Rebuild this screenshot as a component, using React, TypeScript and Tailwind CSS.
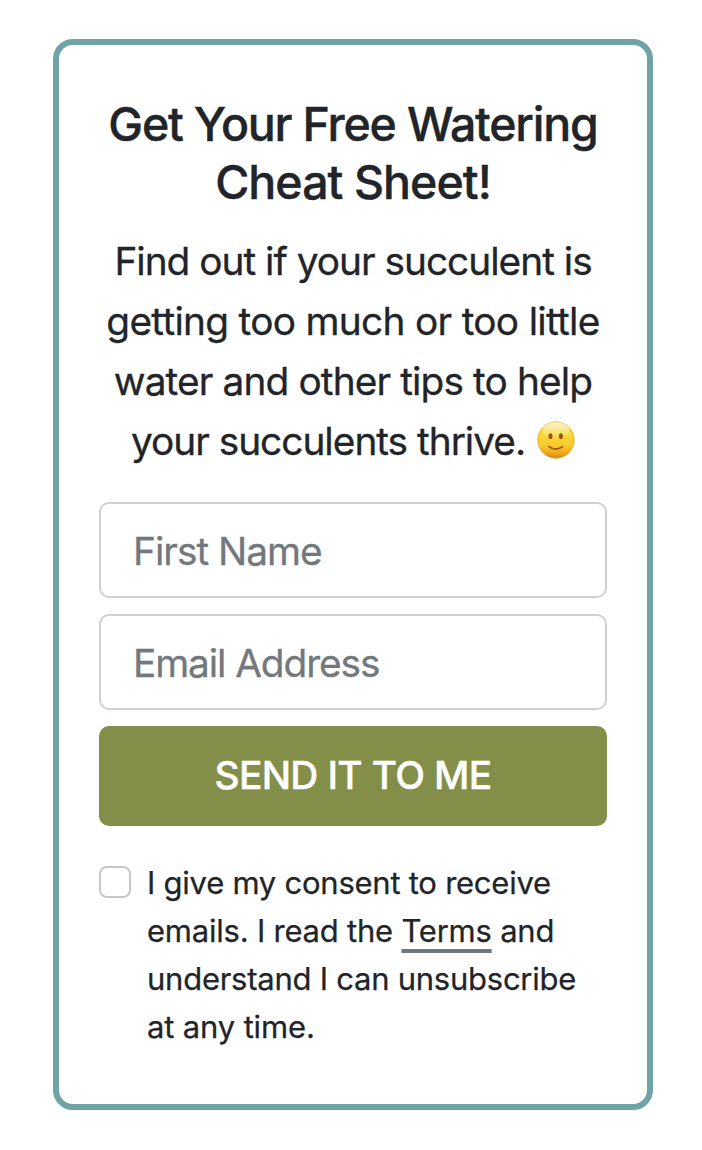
import { useState } from "react";
import clsx from "clsx";

interface Line {
  text: string;
  className?: string;
}

const titleLines: Line[] = [
  { text: "Get Your Free Watering", className: "tracking-[-1.2px]" },
  { text: "Cheat Sheet!", className: "tracking-[-0.95px]" },
];

const introLines: Line[] = [
  { text: "Find out if your succulent is", className: "tracking-[-1px]" },
  { text: "getting too much or too little", className: "tracking-[-0.7px]" },
  { text: "water and other tips to help", className: "tracking-[-0.87px]" },
];

const TextLine: React.FC<Line> = ({ text, className }) => (
  <span className={clsx("block whitespace-nowrap", className)}>{text}</span>
);

const SmileIcon = () => (
  <svg viewBox="0 0 38 38" className="ml-[12px] inline-block h-[38px] w-[38px] align-[-4px]">
    <defs>
      <linearGradient id="face" x1="0" y1="0" x2="0" y2="1">
        <stop offset="0" stopColor="#f3dc55" />
        <stop offset="0.35" stopColor="#f9d83a" />
        <stop offset="0.65" stopColor="#fbca2e" />
        <stop offset="0.85" stopColor="#efa81f" />
        <stop offset="1" stopColor="#d9820f" />
      </linearGradient>
      <linearGradient id="shine" x1="0" y1="0" x2="0" y2="1">
        <stop offset="0" stopColor="#fffdf0" stopOpacity="0.85" />
        <stop offset="1" stopColor="#f7e67a" stopOpacity="0.3" />
      </linearGradient>
    </defs>
    <circle cx="19" cy="19" r="18.5" fill="url(#face)" />
    <circle cx="19" cy="19" r="18" fill="none" stroke="#e3a11c" strokeOpacity="0.7" />
    <ellipse cx="19" cy="9.3" rx="13.5" ry="8" fill="url(#shine)" />
    <ellipse cx="13.5" cy="15.2" rx="2" ry="2.9" fill="#9a5410" />
    <ellipse cx="23.9" cy="15.2" rx="2" ry="2.9" fill="#9a5410" />
    <path
      d="M12 25.6Q18.7 30.8 25.4 25.6"
      fill="none"
      stroke="#9a5410"
      strokeWidth="1.7"
      strokeLinecap="round"
    />
  </svg>
);

const inputClass =
  "block h-24 w-full rounded-[10px] border-2 border-[#ced0d5] bg-white px-8 text-[38.8px] text-[#212529] outline-none [-webkit-text-stroke:0.3px] placeholder:text-[#72787d] placeholder:opacity-100";

export default function App() {
  const [agreed, setAgreed] = useState(false);

  return (
    <div className="min-h-[1150px] bg-white pt-[39px] pl-[53px] font-['Inter',sans-serif] text-[#212529]">
      <form
        className="h-[1071px] w-[600px] rounded-[20px] border-[6px] border-[#6fa3a5] px-10 pt-[50px]"
        onSubmit={(e) => e.preventDefault()}
      >
        <h2 className="text-center text-[46.5px] leading-[58px] font-medium [-webkit-text-stroke:0.4px]">
          {titleLines.map((line) => (
            <TextLine key={line.text} {...line} />
          ))}
        </h2>

        <p className="mt-5 text-center text-[38.8px] leading-[60px] [-webkit-text-stroke:0.3px]">
          {introLines.map((line) => (
            <TextLine key={line.text} {...line} />
          ))}
          <span className="block h-[60px] whitespace-nowrap">
            <span className="tracking-[-1px]">your succulents thrive.</span>
            <SmileIcon />
          </span>
        </p>

        <div className="mt-[31px] flex flex-col gap-4">
          <input
            type="text"
            placeholder="First Name"
            className={clsx(inputClass, "tracking-[-1px]")}
          />
          <input
            type="email"
            placeholder="Email Address"
            className={clsx(inputClass, "tracking-[-1.1px]")}
          />
          <button
            type="submit"
            className="h-[100px] w-full rounded-[10px] bg-[#838f48] pb-0.5 text-[38.8px] font-medium tracking-[-0.65px] text-white [-webkit-text-stroke:0.4px]"
          >
            SEND IT TO ME
          </button>
        </div>

        <label className="mt-[33px] flex gap-4">
          <input
            type="checkbox"
            checked={agreed}
            onChange={() => setAgreed(!agreed)}
            className="mt-[7px] size-8 shrink-0 appearance-none rounded-lg border-2 border-[#c4c7cb] bg-white checked:bg-[#838f48]"
          />
          <span className="text-[31px] leading-[48px] tracking-[-0.25px] [-webkit-text-stroke:0.25px]">
            <TextLine text="I give my consent to receive" />
            <span className="block tracking-[-0.22px] whitespace-nowrap">
              emails. I read the{" "}
              <a
                href="#terms"
                className="underline decoration-[#72787d] decoration-4 underline-offset-[7px] [text-decoration-skip-ink:none]"
              >
                Terms
              </a>{" "}
              and
            </span>
            <TextLine text="understand I can unsubscribe" />
            <TextLine text="at any time." className="tracking-[-0.15px]" />
          </span>
        </label>
      </form>
    </div>
  );
}
